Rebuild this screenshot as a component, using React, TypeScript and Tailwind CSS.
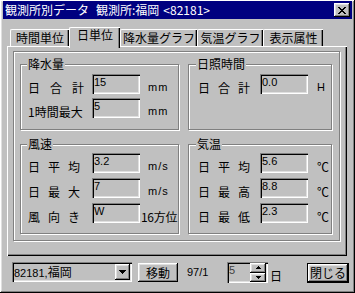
import type { ReactNode } from 'react';

const jp = "font-['Noto_Sans_CJK_JP',sans-serif]";
const latin = "font-['Liberation_Sans','Noto_Sans_CJK_JP',Arial,sans-serif]";

const raised =
  'shadow-[inset_-1px_-1px_#000,inset_1px_1px_#fff,inset_-2px_-2px_#808080,inset_2px_2px_#dfdfdf]';
const sunken =
  'shadow-[inset_1px_1px_#808080,inset_2px_2px_#000,inset_-1px_-1px_#fff,inset_-2px_-2px_#dfdfdf]';
const etched = 'border border-[#808080] shadow-[1px_1px_0_#fff,inset_1px_1px_0_#fff]';

function Field({ value }: { value: string }) {
  return (
    <div className={`h-[20px] w-[48px] shrink-0 bg-[#c0c0c0] pl-[2px] pt-[2px] text-[11px] leading-[13px] ${latin} ${sunken}`}>
      {value}
    </div>
  );
}

function Spaced({ chars, className }: { chars: string[]; className: string }) {
  return (
    <div className={`flex justify-between ${className}`}>
      {chars.map((c, i) => (
        <span key={i}>{c}</span>
      ))}
    </div>
  );
}

function Row({ label, value, unit, col, unitClass }: { label: ReactNode; value: string; unit: ReactNode; col: string; unitClass: string }) {
  return (
    <div className="flex h-[20px] items-end">
      <div className={`${col} shrink-0 text-[12px] leading-[13px] ${jp}`}>{label}</div>
      <Field value={value} />
      <div className={`whitespace-nowrap ${unitClass}`}>{unit}</div>
    </div>
  );
}

function Group({ title, className, titleClass, children }: { title: string; className: string; titleClass: string; children: ReactNode }) {
  return (
    <div className={`${etched} ${className}`}>
      <div className={`-mt-[7px] w-fit bg-[#c0c0c0] px-[1px] text-[12px] leading-[12px] ${jp} ${titleClass}`}>{title}</div>
      {children}
    </div>
  );
}

function Tab({ label, active, className }: { label: string; active?: boolean; className: string }) {
  if (active) {
    return (
      <div
        className={`relative z-10 -mb-[2px] h-[21px] rounded-tl-[2px] border-l border-t border-white bg-[#c0c0c0] pt-[1px] text-center text-[12px] leading-[12px] shadow-[inset_-1px_0_#000,inset_-2px_0_#808080] ${jp} ${className}`}
      >
        {label}
      </div>
    );
  }
  return (
    <div
      className={`h-[17px] rounded-tl-[2px] border-l border-t border-white pt-[2px] text-center text-[12px] leading-[12px] shadow-[inset_-1px_0_#000,inset_-2px_0_#808080] ${jp} ${className}`}
    >
      {label}
    </div>
  );
}

const lcol = 'w-[64px]';
const rcol = 'w-[62px]';

export default function App() {
  return (
    <div className={`h-[293px] w-[355px] overflow-hidden bg-[#c0c0c0] px-[3px] pt-[1px] text-black ${raised}`}>
      {/* title bar */}
      <div className="flex h-[18px] items-center justify-between bg-[#000080] pl-[2px] pr-[2px]">
        <div className={`flex whitespace-nowrap text-[12px] leading-[12px] text-white ${jp}`}>
          <span>観測所別データ</span>
          <span className="ml-[7px]">観測所:福岡</span>
          <span className="ml-[4px]">&lt;82181&gt;</span>
        </div>
        <div className={`flex h-[14px] w-[16px] items-center justify-center bg-[#c0c0c0] ${raised}`}>
          <svg width="8" height="7" viewBox="0 0 8 7" shapeRendering="crispEdges">
            <path d="M0 0h2l2 2.4 2-2.4h2l-3 3.5 3 3.5h-2l-2-2.4-2 2.4h-2l3-3.5z" fill="#000" />
          </svg>
        </div>
      </div>

      {/* tabs */}
      <div className="ml-[7px] mt-[8px] flex h-[19px] items-end">
        <Tab label="時間単位" className="w-[59px]" />
        <Tab label="日単位" active className="w-[51px]" />
        <Tab label="降水量グラフ" className="w-[77px]" />
        <Tab label="気温グラフ" className="w-[66px]" />
        <Tab label="表示属性" className="w-[60px]" />
      </div>

      {/* panel */}
      <div className="ml-[4px] h-[210px] w-[340px] border-l border-t border-white pl-[5px] pt-[4px] shadow-[inset_-1px_-1px_#000,inset_-2px_-2px_#808080]">
        <div className={`h-[190px] w-[327px] pl-[6px] pt-[12px] ${etched}`}>
          <div className="flex gap-[9px]">
            <Group title="降水量" className="h-[66px] w-[159px]" titleClass="ml-[6px]">
              <div className="mt-[4px] flex flex-col gap-[4px] pl-[7px]">
                <Row
                  col={lcol}
                  label={<Spaced chars={['日', '合', '計']} className="w-[56px]" />}
                  value="15"
                  unit="mm"
                  unitClass={`ml-[8px] text-[11px] leading-[13px] tracking-[1px] ${latin}`}
                />
                <Row
                  col={lcol}
                  label="1時間最大"
                  value="5"
                  unit="mm"
                  unitClass={`ml-[8px] text-[11px] leading-[13px] tracking-[1px] ${latin}`}
                />
              </div>
            </Group>
            <Group title="日照時間" className="h-[66px] w-[144px]" titleClass="ml-[7px]">
              <div className="mt-[4px] flex flex-col gap-[4px] pl-[9px]">
                <Row
                  col={rcol}
                  label={<Spaced chars={['日', '合', '計']} className="w-[52px]" />}
                  value="0.0"
                  unit="H"
                  unitClass={`ml-[9px] text-[11px] leading-[13px] ${latin}`}
                />
              </div>
            </Group>
          </div>

          <div className="mt-[14px] flex gap-[9px]">
            <Group title="風速" className="h-[90px] w-[159px]" titleClass="ml-[6px]">
              <div className="mt-[3px] flex flex-col gap-[5px] pl-[7px]">
                <Row
                  col={lcol}
                  label={<Spaced chars={['日', '平', '均']} className="w-[52px]" />}
                  value="3.2"
                  unit="m/s"
                  unitClass={`ml-[8px] text-[11px] leading-[13px] tracking-[1px] ${latin}`}
                />
                <Row
                  col={lcol}
                  label={<Spaced chars={['日', '最', '大']} className="w-[52px]" />}
                  value="7"
                  unit="m/s"
                  unitClass={`ml-[8px] text-[11px] leading-[13px] tracking-[1px] ${latin}`}
                />
                <Row
                  col={lcol}
                  label={<Spaced chars={['風', '向', 'き']} className="w-[52px]" />}
                  value="W"
                  unit="16方位"
                  unitClass={`ml-[1px] text-[12px] leading-[13px] tracking-[-0.3px] ${jp}`}
                />
              </div>
            </Group>
            <Group title="気温" className="h-[90px] w-[144px]" titleClass="ml-[7px]">
              <div className="mt-[3px] flex flex-col gap-[5px] pl-[9px]">
                <Row
                  col={rcol}
                  label={<Spaced chars={['日', '平', '均']} className="w-[52px]" />}
                  value="5.6"
                  unit="℃"
                  unitClass={`ml-[9px] text-[12px] leading-[13px] ${jp}`}
                />
                <Row
                  col={rcol}
                  label={<Spaced chars={['日', '最', '高']} className="w-[52px]" />}
                  value="8.8"
                  unit="℃"
                  unitClass={`ml-[9px] text-[12px] leading-[13px] ${jp}`}
                />
                <Row
                  col={rcol}
                  label={<Spaced chars={['日', '最', '低']} className="w-[52px]" />}
                  value="2.3"
                  unit="℃"
                  unitClass={`ml-[9px] text-[12px] leading-[13px] ${jp}`}
                />
              </div>
            </Group>
          </div>
        </div>
      </div>

      {/* bottom bar */}
      <div className="ml-[9px] mr-[3px] mt-[6px] flex items-start">
        <div className={`flex h-[20px] w-[120px] items-center justify-between bg-[#c0c0c0] pl-[2px] pr-[2px] ${sunken}`}>
          <span className={`text-[11px] leading-[13px] ${latin}`}>
            82181,<span className={`text-[12px] ${jp}`}>福岡</span>
          </span>
          <div className={`flex h-[16px] w-[15px] items-center justify-center bg-[#c0c0c0] ${raised}`}>
            <svg width="7" height="4" viewBox="0 0 7 4" shapeRendering="crispEdges">
              <path d="M0 0h7l-3.5 4z" fill="#000" />
            </svg>
          </div>
        </div>
        <div className={`ml-[6px] mt-[1px] flex h-[19px] w-[40px] items-center justify-center text-[12px] leading-[12px] ${jp} ${raised}`}>
          移動
        </div>
        <div className={`ml-[9px] mt-[4px] w-[40px] text-[11px] leading-[13px] ${latin}`}>97/1</div>
        <div className={`flex h-[21px] w-[41px] items-stretch justify-between bg-[#c0c0c0] py-[1px] pl-[2px] pr-[2px] ${sunken}`}>
          <span className={`pt-[1px] text-[11px] leading-[13px] text-[#404040] ${latin}`}>5</span>
          <div className="flex w-[16px] flex-col">
            <div className={`flex flex-1 items-center justify-center ${raised}`}>
              <svg width="5" height="3" viewBox="0 0 5 3" shapeRendering="crispEdges">
                <path d="M0 3h5l-2.5-3z" fill="#000" />
              </svg>
            </div>
            <div className={`flex flex-1 items-center justify-center ${raised}`}>
              <svg width="5" height="3" viewBox="0 0 5 3" shapeRendering="crispEdges">
                <path d="M0 0h5l-2.5 3z" fill="#000" />
              </svg>
            </div>
          </div>
        </div>
        <div className={`ml-[2px] mt-[8px] text-[12px] leading-[12px] ${jp}`}>日</div>
        <div className="ml-auto mt-[1px] h-[20px] w-[42px] border border-black">
          <div className={`flex h-full w-full items-center justify-center text-[12px] leading-[12px] ${jp} ${raised}`}>閉じる</div>
        </div>
      </div>
    </div>
  );
}
